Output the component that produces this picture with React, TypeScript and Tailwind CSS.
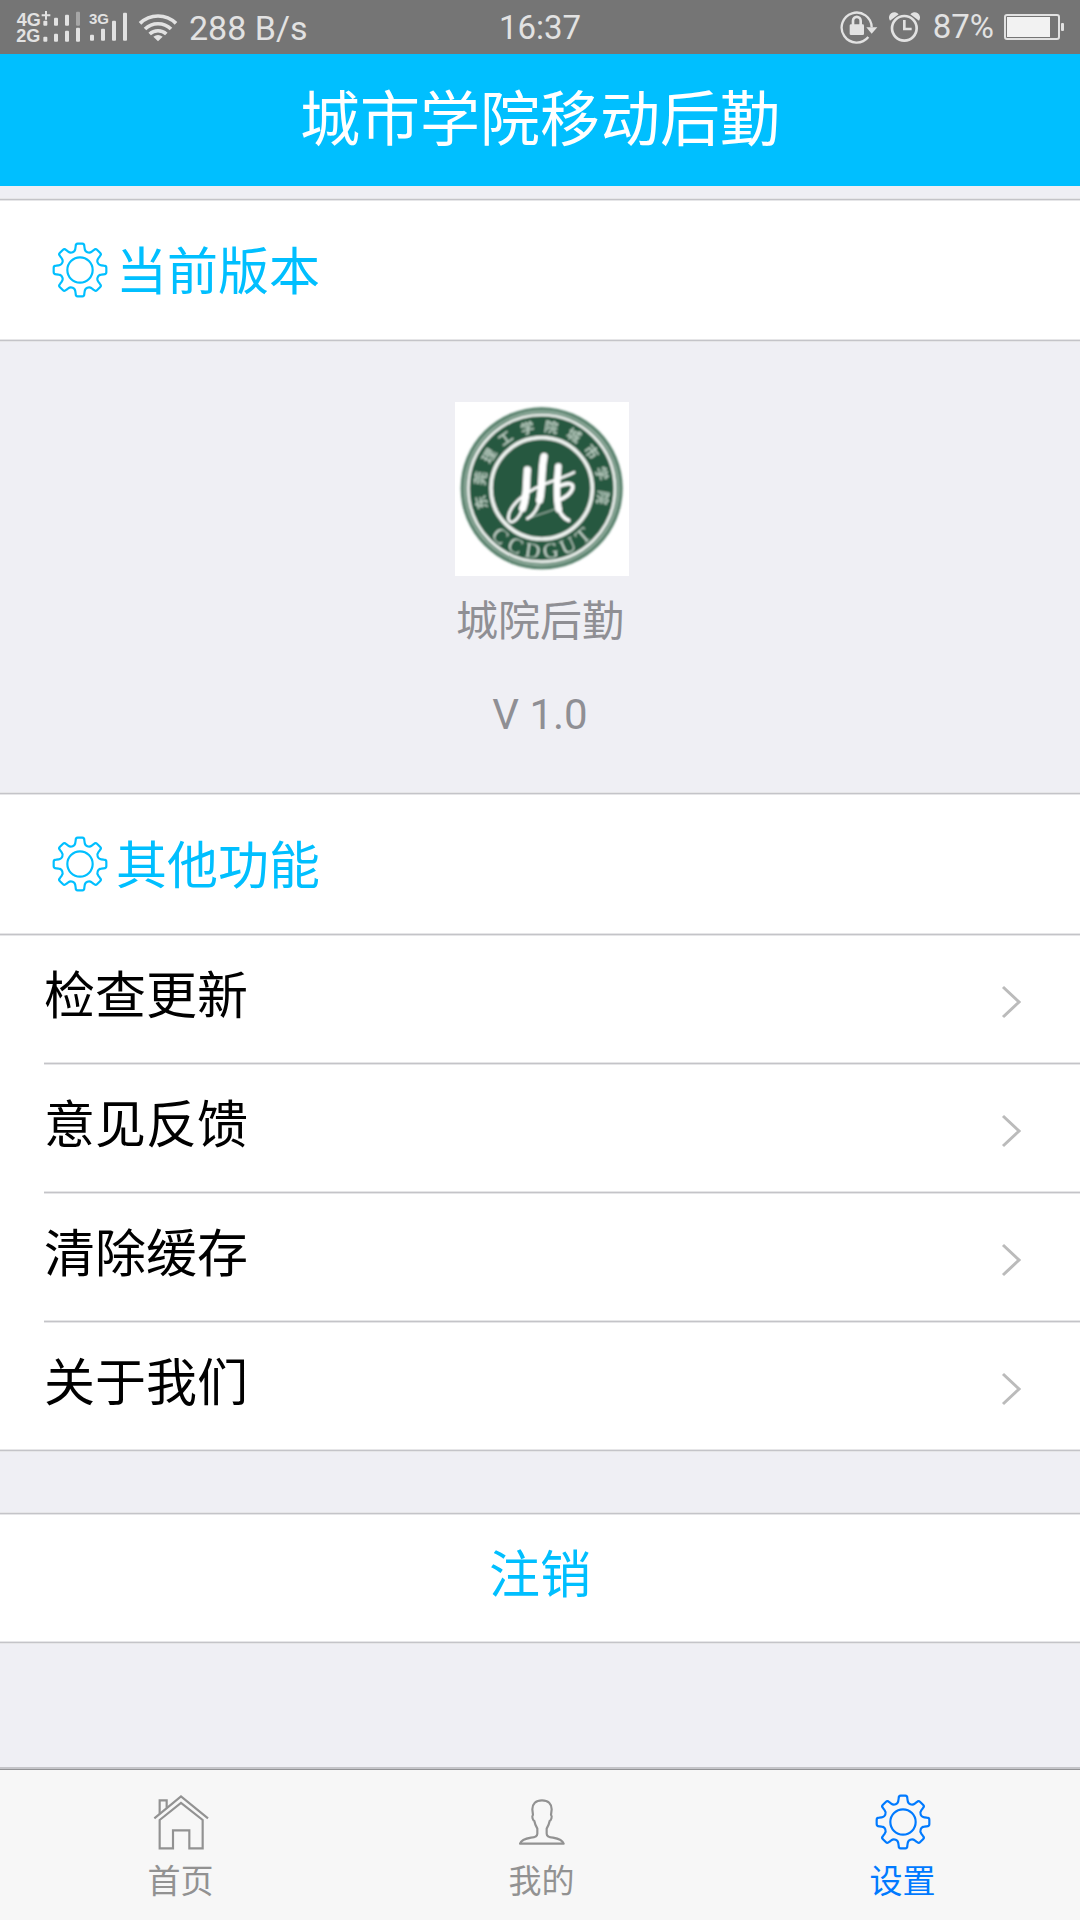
import React from "react";

const TOOTH: [string, number[][]][] = [
  ["L", [[-14, -64]]],
  ["L", [[-13, -71]]],
  ["Q", [[-13, -79], [-7, -79]]],
  ["L", [[7, -79]]],
  ["Q", [[13, -79], [13, -71]]],
  ["L", [[14, -64]]],
];

function rotate([x, y]: number[], turn: number) {
  const a = (turn * Math.PI) / 4;
  const rx = x * Math.cos(a) - y * Math.sin(a);
  const ry = x * Math.sin(a) + y * Math.cos(a);
  return `${rx.toFixed(2)} ${ry.toFixed(2)}`;
}

// Outline of an eight-toothed cog centred on the origin.
const gearPath =
  Array.from({ length: 8 }, (_, turn) =>
    TOOTH.map(([cmd, pts], i) => {
      const c = i === 0 ? (turn === 0 ? "M" : "A13 13 0 0 0 ") : cmd;
      return c + pts.map((p) => rotate(p, turn)).join(" ");
    }).join("")
  ).join("") + `A13 13 0 0 0 ${rotate([-14, -64], 0)}Z`;

function GearIcon() {
  return (
    <svg viewBox="-81 -81 162 162" className="size-[54px] shrink-0 overflow-visible" fill="none" stroke="currentColor" strokeWidth="6.5" aria-hidden="true">
      <path d={gearPath} strokeLinejoin="round" />
      <circle r="38" />
    </svg>
  );
}

function HomeIcon() {
  return (
    <svg viewBox="130 134 162 162" className="size-[54px] overflow-visible" fill="none" stroke="currentColor" strokeWidth="6.5" aria-hidden="true">
      <path d="M131 204 211 138 292 204" />
      <path d="M147 190V150H168V172" />
      <path d="M147 209 211 158 276 209V294H236V240H187V294H147Z" />
    </svg>
  );
}

function PersonIcon() {
  return (
    <svg viewBox="165 134 162 162" className="size-[54px]" fill="none" stroke="currentColor" strokeWidth="6.5" strokeLinejoin="round" aria-hidden="true">
      <path d="M246 150C227 150 217 161 217 177L219 194C214 198 219 210 223 212C225 223 229 230 232 235V250C232 258 225 261 213 262C195 265 183 271 180 280H311C308 271 296 265 279 262C267 261 260 258 260 250V235C263 230 267 223 269 212C273 210 278 198 273 194L275 177C275 161 265 150 246 150Z" />
    </svg>
  );
}

function Chevron() {
  return (
    <svg viewBox="0 0 20 34" className="h-[34px] w-[20px]" fill="none" stroke="#bbb" strokeWidth="3" aria-hidden="true">
      <path d="M2 2 18 17 2 32" />
    </svg>
  );
}

const emblemTop = [..."东莞理工学院城市学院"].map((char, i) => ({ char, angle: -103 + i * 22.4 }));
const emblemBottom = [..."CCDGUT"].map((char, i) => ({ char, angle: 41 - i * 16.4 }));

function Emblem() {
  return (
    <svg viewBox="45 36 522 522" className="size-[174px] bg-white" role="img" aria-label="东莞理工学院城市学院 CCDGUT">
      <defs>
        <filter id="emblem-soft">
          <feGaussianBlur stdDeviation="3" />
        </filter>
      </defs>
      <g filter="url(#emblem-soft)">
        <circle cx="305" cy="295" r="243" fill="#527d67" />
        <circle cx="305" cy="295" r="231" fill="none" stroke="#9db7a9" strokeWidth="5" />
        <circle cx="305" cy="295" r="220" fill="#28593f" stroke="#f1f5f2" strokeWidth="8" />
        <circle cx="305" cy="295" r="152" fill="none" stroke="#f1f5f2" strokeWidth="11" />
        <g fill="#b9cbc0" fontSize="42" fontWeight="700" fontFamily="'Noto Sans CJK SC', sans-serif" textAnchor="middle">
          {emblemTop.map(({ char, angle }) => (
            <text key={angle} x="305" y="125" transform={`rotate(${angle} 305 295)`}>{char}</text>
          ))}
        </g>
        <g fill="#c9d6ce" fontSize="64" fontFamily="'Liberation Serif', serif" textAnchor="middle">
          {emblemBottom.map(({ char, angle }) => (
            <text key={angle} x="305" y="505" transform={`rotate(${angle} 305 295)`}>{char}</text>
          ))}
        </g>
        <g fill="none" stroke="#fff" strokeLinecap="round">
          <path d="M262 240C258 290 262 318 248 355" strokeWidth="22" />
          <path d="M250 350C235 395 208 408 205 385C205 350 250 310 300 288C330 275 365 265 402 247" strokeWidth="8" />
          <path d="M312 200C303 240 308 290 299 330" strokeWidth="22" />
          <path d="M300 325C296 350 285 372 262 386" strokeWidth="8" />
          <path d="M262 386C290 375 320 368 350 355" strokeWidth="2" />
          <path d="M355 230C351 270 347 320 356 358" strokeWidth="20" />
          <path d="M354 350C360 372 370 384 386 391" strokeWidth="11" />
          <path d="M355 290C385 276 402 279 398 295C392 312 375 324 352 332" strokeWidth="11" />
        </g>
      </g>
    </svg>
  );
}

function Divider() {
  return <div className="h-[3px] shrink-0 border-y border-[#e6e6e8] bg-[#c4c4c8]" />;
}

function SectionTitle({ children }: { children: React.ReactNode }) {
  return (
    <div className="bg-white px-[53px] py-[31px]">
      <h2 className="flex items-center gap-[9px] text-[51px] text-[#00bfff]">
        <GearIcon />
        <span className="pt-[6px] leading-[70px]">{children}</span>
      </h2>
    </div>
  );
}

function SignalIcons() {
  return (
    <svg viewBox="0 0 336 96" className="h-[32px] w-[112px] overflow-visible" fill="#e2e2e2" fontFamily="'Liberation Sans', sans-serif" fontWeight="700" aria-hidden="true">
      <text fontSize="54">
        <tspan x="2" y="44">4G</tspan>
        <tspan x="1" y="92">2G</tspan>
      </text>
      <text x="219" y="38" fontSize="45">3G</text>
      <path d="M77 13H103M90 0V26" stroke="#e2e2e2" strokeWidth="6" />
      <rect x="82" y="29" width="12" height="15" rx="3" />
      <rect x="114" y="20" width="12" height="24" rx="3" />
      <rect x="147" y="11" width="12" height="33" rx="3" />
      <rect x="180" y="2" width="12" height="42" rx="3" fill="#a6a6a6" />
      <rect x="82" y="77" width="12" height="15" rx="3" />
      <rect x="114" y="68" width="12" height="24" rx="3" />
      <rect x="147" y="59" width="12" height="33" rx="3" />
      <rect x="180" y="50" width="12" height="42" rx="3" />
      <rect x="222" y="71" width="12" height="18" rx="3" />
      <rect x="255" y="53" width="12" height="36" rx="3" />
      <rect x="288" y="29" width="12" height="60" rx="3" />
      <rect x="321" y="5" width="12" height="84" rx="3" />
    </svg>
  );
}

function StatusBar() {
  return (
    <div className="grid h-[54px] grid-cols-[1fr_auto_1fr] items-center bg-[#757575] px-[16px] text-[33px] leading-[40px] text-[#e2e2e2]">
      <div className="flex items-center">
        <SignalIcons />
        <svg viewBox="416 36 114 84" className="ml-[11px] h-[28px] w-[38px] overflow-visible" fill="none" stroke="#e2e2e2" strokeWidth="11" aria-hidden="true">
          <path d="M419 67A77 77 0 0 1 527 67" />
          <path d="M434 84A56 56 0 0 1 512 84" />
          <path d="M448 99A37 37 0 0 1 498 99" />
          <path d="M459 107Q473 97 487 107L473 121Z" fill="#e2e2e2" stroke="none" />
        </svg>
        <span className="ml-[12px] pt-[1px] text-[34px]">288 B/s</span>
      </div>
      <span className="pt-[2px]">16:37</span>
      <div className="flex items-center justify-end">
        <svg viewBox="60 30 114 102" className="h-[34px] w-[38px]" fill="none" stroke="#e2e2e2" strokeWidth="7" aria-hidden="true">
          <path d="M155 82A45 45 0 1 0 145 111" />
          <path d="M139 82H172L155 101Z" fill="#e2e2e2" stroke="none" />
          <rect x="89" y="73" width="43" height="32" rx="4" fill="#e2e2e2" stroke="none" />
          <path d="M99 76V62A11 11 0 0 1 122 62V76" strokeWidth="8" />
        </svg>
        <svg viewBox="204 33 99 96" className="ml-[10px] h-[32px] w-[33px]" fill="none" stroke="#e2e2e2" strokeWidth="8" aria-hidden="true">
          <circle cx="253" cy="85" r="37" />
          <path d="M253 60V87H275" strokeWidth="8" />
          <path d="M210 62A15 15 0 0 1 236 43ZM297 62A15 15 0 0 0 271 43Z" fill="#e2e2e2" stroke="none" />
        </svg>
        <span className="ml-[12px]">87%</span>
        <svg viewBox="552 42 180 78" className="ml-[10px] h-[26px] w-[60px]" fill="none" aria-hidden="true">
          <rect x="555" y="45" width="162" height="72" rx="6" stroke="#e2e2e2" strokeWidth="6" />
          <rect x="561" y="51" width="129" height="60" fill="#f2f2f2" />
          <rect x="723" y="69" width="9" height="24" rx="3" fill="#e2e2e2" />
        </svg>
      </div>
    </div>
  );
}

const actions = ["检查更新", "意见反馈", "清除缓存", "关于我们"];

const tabs = [
  { label: "首页", Icon: HomeIcon, active: false },
  { label: "我的", Icon: PersonIcon, active: false },
  { label: "设置", Icon: GearIcon, active: true },
];

export default function App() {
  return (
    <div className="flex min-h-screen flex-col bg-[#efeff4] font-[Roboto,'Noto_Sans_CJK_SC',sans-serif]">
      <StatusBar />
      <header className="bg-[#00bfff] pt-[23px] pb-[21px] text-center">
        <h1 className="text-[60px] leading-[88px] text-white">城市学院移动后勤</h1>
      </header>

      <main className="flex grow flex-col pt-[12px]">
        <Divider />
        <SectionTitle>当前版本</SectionTitle>
        <Divider />
        <section className="flex flex-col items-center pt-[60px] pb-[45px] text-[42px] text-[#8f8f94]">
          <div className="pl-[3px]">
            <Emblem />
          </div>
          <p className="pt-[14px] leading-[64px]">城院后勤</p>
          <p className="pt-[29px] leading-[64px]">V 1.0</p>
        </section>
        <Divider />
        <SectionTitle>其他功能</SectionTitle>
        <Divider />
        <ul className="bg-white">
          {actions.map((label, i) => (
            <li key={label}>
              {i > 0 && (
                <div className="pl-[44px]">
                  <Divider />
                </div>
              )}
              <button type="button" className="flex w-full items-end justify-between pt-[23px] pr-[59px] pb-[27px] pl-[44px] text-left text-[51px] leading-[76px] text-black">
                {label}
                <span className="flex pb-[16px]">
                  <Chevron />
                </span>
              </button>
            </li>
          ))}
        </ul>
        <Divider />
        <div className="h-[60px]" />
        <Divider />
        <button type="button" className="bg-white pt-[23px] pb-[27px] text-center text-[51px] leading-[76px] text-[#00bfff]">
          注销
        </button>
        <Divider />
      </main>

      <nav className="overflow-hidden border-t-2 border-[#c4c4c8]">
        <div className="-mr-[3px] grid grid-cols-3 border-t border-[#939396] bg-[#f7f7f7] pt-[25px] pb-[14px]">
          {tabs.map(({ label, Icon, active }) => (
            <a
              key={label}
              href="#"
              aria-current={active ? "page" : undefined}
              className={`flex flex-col items-center gap-[9px] text-[33px] leading-[48px] ${active ? "text-[#007aff]" : "text-[#929292]"}`}
            >
              <Icon />
              {label}
            </a>
          ))}
        </div>
      </nav>
    </div>
  );
}
